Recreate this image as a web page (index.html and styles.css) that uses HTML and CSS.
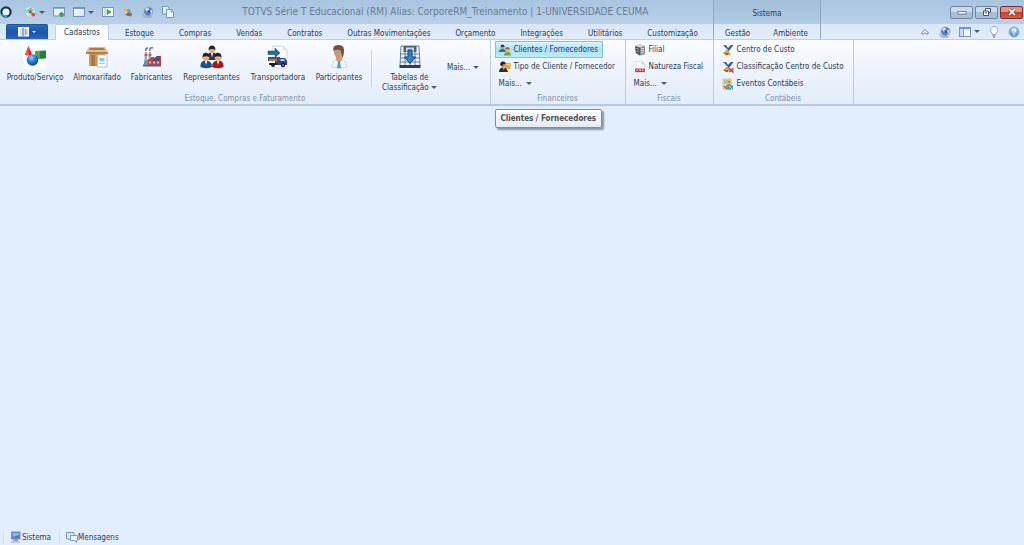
FILE: index.html
```html
<!DOCTYPE html>
<html lang="pt-BR">
<head>
<meta charset="utf-8">
<meta name="viewport" content="width=device-width, initial-scale=1">
<title>TOTVS Série T Educacional (RM)</title>
<link rel="stylesheet" href="styles.css">
</head>
<body>
<svg class="defs" aria-hidden="true">
  <defs>
    <linearGradient id="screen" x1="0" y1="0" x2="1" y2="1"><stop offset="0" stop-color="#fff"/><stop offset="1" stop-color="#cfe0f5"/></linearGradient>
    <radialGradient id="ball" cx=".4" cy=".3" r=".7"><stop offset="0" stop-color="#9ad0ff"/><stop offset=".5" stop-color="#2f7be0"/><stop offset="1" stop-color="#0b3f9e"/></radialGradient>
    <radialGradient id="help" cx=".5" cy=".3" r=".7"><stop offset="0" stop-color="#c4e6fa"/><stop offset="1" stop-color="#3b83c4"/></radialGradient>
    <symbol id="globe" viewBox="0 0 12 12">
      <circle cx="6.500" cy="5.500" r="4.600" fill="#5b7fc4" stroke="#a7b4cb" stroke-width=".8"/>
      <path d="M3 3l3-1.500 1 2-2 2.500zM7 5l3-1 .5 2.500L8 9z" fill="#dfe8f8"/>
      <path d="M5 4l3 1 1 3-2-1z" fill="#2a3f94"/>
      <path d="M.5 7.500Q2 11 6 10.500l3.500.5-4 .9Q1 12 .5 7.500z" fill="#b9c2d2" stroke="#78849b" stroke-width=".4"/>
    </symbol>
    <symbol id="window" viewBox="0 0 12 10">
      <rect x=".5" y=".5" width="11" height="9" fill="url(#screen)" stroke="#7392c0"/>
      <path d="M1 1.500h10" stroke="#6d9ade"/>
    </symbol>
  </defs>
</svg>
<header class="titlebar">
  <div class="quick">
    <svg class="logo" viewBox="0 0 12 12"><circle cx="6" cy="6" r="4.600" fill="#e8f6fb" stroke="#123552" stroke-width="2.200"/><path d="M2 7.500Q3.500 10.500 7 10.500" fill="none" stroke="#42b1cb" stroke-width="1.400"/></svg>
    <button class="qbtn" aria-label="Módulos"><svg viewBox="0 0 12 12"><circle cx="6" cy="5.800" r="5.200" fill="#d3ecdf" stroke="#9fc4c9" stroke-width=".5"/><path d="M2 5L6 2l4 2-3 2z" fill="#7cbf8c"/><path d="M1 4l4 4M8 1L5 6" stroke="#6db1d6"/><circle cx="6.500" cy="6" r="1.600" fill="#dc4351"/><circle cx="9.200" cy="8.500" r="2" fill="#d6495d"/><circle cx="3.500" cy="8" r="1.700" fill="#f5fbff" stroke="#6eb1b9" stroke-width=".6"/></svg><i class="caret"></i></button>
    <button class="qbtn" aria-label="Nova janela"><svg viewBox="0 0 12 12"><rect x=".5" y="1.500" width="11" height="8.500" fill="url(#screen)" stroke="#7893b5"/><path d="M1 2.500h10" stroke="#83b5dc"/><path d="M8.500 6v5M6 8.500h5" stroke="#3d9b42" stroke-width="2"/></svg></button>
    <button class="qbtn" aria-label="Janelas"><svg viewBox="0 0 12 12"><use href="#window" y="1" width="12" height="10"/></svg><i class="caret"></i></button>
    <button class="qbtn" aria-label="Executar"><svg viewBox="0 0 12 12"><rect x=".5" y="1.500" width="11" height="9" fill="#f2faf7" stroke="#7893b5"/><path d="M3 2v8" stroke="#a2bcda"/><path d="M5 3.500l4 2.500-4 2.500z" fill="#45a951" stroke="#267e35" stroke-width=".5"/></svg></button>
    <button class="qbtn" aria-label="Aparência"><svg viewBox="0 0 12 12"><path d="M2 1.500l4 1 2 3.500-4 1z" fill="#f8e4a8"/><path d="M2.500 2.500L7 7" stroke="#e5a63f" stroke-width="1.800"/><path d="M5.500 3l3 3" stroke="#5989ce" stroke-width="1.500"/><path d="M3 9l6 1.500L10 8 6.500 6z" fill="#756a68"/><circle cx="9" cy="8" r="1.200" fill="#d8564c"/></svg></button>
    <button class="qbtn" aria-label="Portal"><svg viewBox="0 0 12 12"><use href="#globe"/></svg></button>
    <button class="qbtn" aria-label="Copiar"><svg viewBox="0 0 12 12"><path d="M.5.500h5l1.500 1.500v6H.5z" fill="#e2efff" stroke="#6d98cf"/><path d="M4.500 3.500h5l2 2v6h-7z" fill="#f4f9ff" stroke="#6d98cf"/><path d="M9 3.500V6h2.500" fill="none" stroke="#6d98cf"/></svg></button>
  </div>
  <h1 class="title">TOTVS Série T Educacional (RM) Alias: CorporeRM_Treinamento | 1-UNIVERSIDADE CEUMA</h1>
  <div class="winbtns">
    <button class="wbtn" aria-label="Minimizar"><svg viewBox="0 0 12 10"><rect x="2" y="4.500" width="8" height="2.500" fill="#fff" stroke="#5c6c82" stroke-width=".8"/></svg></button>
    <button class="wbtn" aria-label="Restaurar"><svg viewBox="0 0 12 10"><path d="M4.500 1.500h5v4h-5z" fill="#fff" stroke="#45556c"/><path d="M2.500 4h5v4.500h-5z" fill="#fff" stroke="#45556c"/><path d="M4 5.800h2" stroke="#45556c"/></svg></button>
    <button class="wbtn close" aria-label="Fechar"><svg viewBox="0 0 12 10"><path d="M3.200 2.200l5.600 5.600M8.800 2.200L3.200 7.800" stroke="#5e2b2b" stroke-width="3"/><path d="M3.200 2.200l5.600 5.600M8.800 2.200L3.200 7.800" stroke="#fff" stroke-width="1.900"/></svg></button>
  </div>
</header>
<nav class="tabs">
  <button class="app" aria-label="Menu do aplicativo"><svg viewBox="0 0 12 10"><rect x=".5" y=".5" width="10" height="8.500" fill="#f4f8ff" stroke="#fff"/><path d="M5 1v8" stroke="#3d5f98"/><path d="M6.500 3h3M6.500 5h3M6.500 7h3" stroke="#526f9f" stroke-width=".9"/><path d="M2 3h2M2 5h2M2 7h2" stroke="#a9bad7" stroke-width=".8"/></svg><i class="caret light"></i></button>
  <button class="tab active">Cadastros</button>
  <button class="tab">Estoque</button>
  <button class="tab">Compras</button>
  <button class="tab">Vendas</button>
  <button class="tab">Contratos</button>
  <button class="tab">Outras Movimentações</button>
  <button class="tab">Orçamento</button>
  <button class="tab">Integrações</button>
  <button class="tab">Utilitários</button>
  <button class="tab">Customização</button>
  <div class="context">
    <span class="ctxname">Sistema</span>
    <button class="tab">Gestão</button>
    <button class="tab">Ambiente</button>
  </div>
  <div class="tools">
    <button class="qbtn" aria-label="Recolher faixa"><svg viewBox="0 0 12 12"><path d="M3 6.500L6 3.500l3 3v1.500H7.500L6 6.500 4.500 8H3z" fill="#fff" stroke="#4c5a70" stroke-width=".8"/></svg></button>
    <button class="qbtn" aria-label="Web"><svg viewBox="0 0 12 12"><use href="#globe"/></svg></button>
    <button class="qbtn" aria-label="Layout"><svg viewBox="0 0 12 12"><rect x=".5" y="1.500" width="11" height="9" fill="#f7faff" stroke="#7392c0"/><path d="M1 2.500h10" stroke="#6d9ade" stroke-width="1.500"/><path d="M1 3h3.500v7H1z" fill="#c9dcf5"/><path d="M4.500 3v7" stroke="#7392c0" stroke-width=".8"/></svg><i class="caret"></i></button>
    <button class="qbtn" aria-label="Dica"><svg viewBox="0 0 12 12"><path d="M4.500 8.500Q4.300 7 3 6A3.600 3.600 0 1 1 9 6Q7.700 7 7.500 8.500z" fill="#fbfdff" stroke="#8698b3" stroke-width=".8"/><path d="M4.500 9.800h3M5 11.200h2" stroke="#75869f"/></svg></button>
    <button class="qbtn" aria-label="Ajuda"><svg viewBox="0 0 12 12"><circle cx="6" cy="6" r="5" fill="url(#help)" stroke="#7fa9d1" stroke-width=".8"/><path d="M4.300 4.800Q4.400 3.200 6 3.200t1.700 1.400Q7.700 5.500 6 6.300v.9M6 8.300v1.100" fill="none" stroke="#fff" stroke-width="1.200"/></svg></button>
  </div>
</nav>
<main class="ribbon">
  <section class="group">
    <div class="items">
      <button class="big w-produto"><svg viewBox="0 0 24 24"><path d="M0 0h23v24H0z" fill="#fff" opacity=".7"/><path d="M12 6l11-.5v8L13 14z" fill="#257f35"/><path d="M12 6l5 0v7.800l-4 .2z" fill="#4aa449"/><path d="M5.500 1L9 9.500Q5.500 11.500 2 9.500z" fill="#dc1c12"/><path d="M5.500 1L6 10.500Q3.500 10.500 2 9.500z" fill="#f25a48"/><circle cx="9.500" cy="15" r="5.800" fill="url(#ball)"/></svg><span>Produto/Serviço</span></button>
      <button class="big w-almox"><svg viewBox="0 0 24 24"><path d="M4 7h16v14H4z" fill="#c99a5c"/><path d="M4 2h16l3 5H1z" fill="#e2bd87"/><path d="M1 7h22v2H1z" fill="#b07f48"/><path d="M5 3h14l1 2H4z" fill="#a67b4b"/><path d="M6 10h4v11H6z" fill="#a97840"/><path d="M12.500 10h9.500v12h-9.500z" fill="#f6fbff" stroke="#a4b9c8" stroke-width=".8"/><path d="M14.500 13h5v3.500h-5z" fill="#8cc9df"/><path d="M14 18.500h6" stroke="#a8c4d4"/></svg><span>Almoxarifado</span></button>
      <button class="big w-fabr"><svg viewBox="0 0 24 24"><path d="M5 7h2v13H4zM9 7h2v13H8z" fill="#9fa4bb"/><path d="M4.500 10h3M8.500 10h3" stroke="#cf4250" stroke-width="1.500"/><path d="M6 6Q5 3 8 3M10 6Q9 2 13 3" stroke="#70708f" stroke-width="1.500" fill="none"/><path d="M7 15l4-2v-1h3v2l3-3h4v9H7z" fill="#bb4745"/><path d="M13 14l4-3h3v5h-7z" fill="#51508a"/><path d="M9 17.500h2M13 17.500h2M17 17.500h2" stroke="#f0c27c" stroke-width="2"/><path d="M3 19.500h18v2H3z" fill="#5c5d80"/><path d="M4 16h4v4H4z" fill="#5b98b2"/></svg><span>Fabricantes</span></button>
      <button class="big w-repr"><svg viewBox="0 0 24 24"><path d="M7 12Q7 7.500 12 7.500t5 4.500v3H7z" fill="#283143"/><path d="M11 8h2l-1 5z" fill="#fff"/><circle cx="12" cy="4.800" r="3.200" fill="#e4ad80"/><path d="M8.600 5Q8.500.500 12 .500T15.400 5Q12 2.800 8.600 5z" fill="#34241f"/><path d="M.5 22Q0 15.500 6 15.500t6 6.500Q6 24.500.5 22z" fill="#1b508d"/><path d="M12 22q0-6.500 6-6.500T23.500 22q-5.500 2.500-11.500 0z" fill="#a91520"/><path d="M4.800 15.500h2.600L6 20zM16.800 15.500h2.600L18 20z" fill="#fff"/><circle cx="6" cy="12.500" r="3.400" fill="#e6b184"/><circle cx="18" cy="12.500" r="3.400" fill="#e6b184"/><path d="M2.400 12.500Q2.400 7.500 6 7.800t3.600 4.700Q6 10 2.400 12.500zM14.400 12.500Q14.400 7.500 18 7.800t3.600 4.700Q18 10 14.400 12.500z" fill="#30211e"/></svg><span>Representantes</span></button>
      <button class="big w-transp"><svg viewBox="0 0 24 24"><path d="M7 1h10l4 4v18H7z" fill="#f7faff" stroke="#bdc7d4" stroke-width=".7"/><path d="M17 1v4h4" fill="#d8e1ed"/><path d="M2 6h7V3l5 5-5 4.500v-3H2z" fill="#206f9f" stroke="#154864" stroke-width=".5"/><path d="M2 12h12v4H2z" fill="#55505c"/><path d="M3 14h8v2H3z" fill="#c87941"/><path d="M14 13h5l2 3v4H9v-4h5z" fill="#304482"/><path d="M14.500 14h3.500l1 2h-4.500z" fill="#b8cff0"/><path d="M3 18h8v2H3z" fill="#22222e"/><circle cx="7" cy="20" r="2" fill="#181b29"/><circle cx="17" cy="20" r="2.200" fill="#181b29"/><circle cx="17" cy="20" r=".8" fill="#ccd"/></svg><span>Transportadora</span></button>
      <button class="big w-part"><svg viewBox="0 0 24 24"><path d="M5 22q0-8 7-8t8 8q-7 3-15 0z" fill="#f3f7fc" stroke="#bccbdd" stroke-width=".8"/><path d="M9 12h6v3l-3 3-3-3z" fill="#cf9a7d"/><path d="M11 16h2l1 7h-4z" fill="#4d9bd5"/><ellipse cx="11.500" cy="7" rx="4.500" ry="6" fill="#c9997c"/><path d="M6.500 6Q5 0 11 0t6 5q0 6-2 8 0-6-2-8-3-1-6.500 1z" fill="#72513f"/></svg><span>Participantes</span></button>
      <i class="sep"></i>
      <button class="big w-tabela"><svg viewBox="0 0 24 24"><path d="M3 1h18l1 20H2z" fill="#edf3fa" stroke="#6f7e90"/><path d="M7 6v15M17 6v15M12 6v15M2 9h20M2 13h20M2 17h20" stroke="#6c7e94"/><path d="M1.500 20h21v3h-21z" fill="#353e4a"/><path d="M5.500 1h13v6h-13z" fill="#4e6174"/><path d="M8 2.500h8v4H8z" fill="#c8d9e8"/><path d="M10 5h4v7h3.500L12 18.500 6.500 12H10z" fill="#2d88c8" stroke="#123f70"/></svg><span>Tabelas de<br>Classificação <i class="caret"></i></span></button>
      <button class="more">Mais... <i class="caret"></i></button>
    </div>
    <h2>Estoque, Compras e Faturamento</h2>
  </section>
  <section class="group w-fin">
    <div class="rows">
      <button class="row hot"><svg viewBox="0 0 12 12"><path d="M0 7.500Q0 5 3.500 5T7 8H0z" fill="#2f7770"/><circle cx="3.500" cy="3.500" r="1.800" fill="#c8945c"/><path d="M1.500 3.200Q1.500.500 3.500.500T5.700 3Q3.500 2 1.500 3.200z" fill="#262b2f"/><path d="M5 11.500Q5 8 8.500 8t3.500 3.500z" fill="#74a33e"/><circle cx="8.300" cy="6" r="2.200" fill="#e7ba72"/><path d="M6 5.500Q6 3 8.300 3T10.800 5.500Q8 4.500 6 5.500z" fill="#8b652e"/></svg><span>Clientes / Fornecedores</span><span class="tooltip" role="tooltip">Clientes / Fornecedores</span></button>
      <button class="row"><svg viewBox="0 0 12 12"><path d="M6 2h5.500v6H6z" fill="#e6a737"/><path d="M6 3.500h5.500" stroke="#f4d170"/><circle cx="4" cy="3.600" r="2.400" fill="#ba7c4f"/><path d="M1.200 4Q1 .5 4 .5T6.500 3Q4 2 3 5z" fill="#241c1c"/><path d="M0 11Q0 6.500 4 6.500T9 11z" fill="#352e35"/><path d="M3.500 6.500h2L5 9z" fill="#d9cfb8"/></svg><span>Tipo de Cliente / Fornecedor</span></button>
      <button class="row plain">Mais... <i class="caret"></i></button>
    </div>
    <h2>Financeiros</h2>
  </section>
  <section class="group w-fis">
    <div class="rows">
      <button class="row"><svg viewBox="0 0 12 12"><path d="M1 2l5-1.500L11 2v8l-5 1.500L2 9z" fill="#85898d"/><path d="M1 2l5 1.500v8L2 9z" fill="#505559"/><path d="M1 2l5-1.500L11 2 6 3.500z" fill="#d2d4d5"/><path d="M7 5l3-.8M7 7l3-.8M7 9l3-.8" stroke="#e8eaec"/><path d="M2.500 4.500l2 .7M3 7l1.500.6" stroke="#c4c8cb"/></svg><span>Filial</span></button>
      <button class="row"><svg viewBox="0 0 12 12"><path d="M2 .500h6L10.500 3v8.500H2z" fill="#fff" stroke="#cdd8e8" stroke-width=".8"/><path d="M8 .5V3h2.500" fill="none" stroke="#b2c6de"/><rect x="1" y="7.500" width="10" height="3.500" rx="1" fill="#d7353b"/><path d="M2.500 9.200h1.500M5 9.200h2M8 9.200h1.500" stroke="#fbd8d8" stroke-width="1.200"/></svg><span>Natureza Fiscal</span></button>
      <button class="row plain">Mais... <i class="caret"></i></button>
    </div>
    <h2>Fiscais</h2>
  </section>
  <section class="group w-con">
    <div class="rows">
      <button class="row"><svg viewBox="0 0 12 12"><path d="M5.500 5L9 11l-5 .5L1 9z" fill="#e9a23b"/><path d="M1.500 9.500l4 1.500 1-2z" fill="#8f4e29"/><path d="M1 1.500L4 1l2 3 3-3h2.500L8 5.500 6.500 7z" fill="#2856a5"/><path d="M2 2l4 4" stroke="#8cb9e8"/></svg><span>Centro de Custo</span></button>
      <button class="row"><svg viewBox="0 0 12 12"><path d="M5.500 5L8 10l-4 1.500L1 9z" fill="#e9a23b"/><path d="M1.500 9.500l4 1.500 1-2z" fill="#8f4e29"/><path d="M1 1.500L4 1l2 3 3-3h2.500L8 5.500 6.500 7z" fill="#2856a5"/><path d="M2 2l4 4" stroke="#8cb9e8"/><path d="M7 7l4.500 4.500M11.500 7.500L7.500 11" stroke="#bd3041" stroke-width="1.400"/></svg><span>Classificação Centro de Custo</span></button>
      <button class="row"><svg viewBox="0 0 12 12"><path d="M1 1h8v10H1z" fill="#f0df91" stroke="#b5a773" stroke-width=".6"/><path d="M2 3h4M2 5h3" stroke="#77a2c5"/><circle cx="7" cy="4" r="1.800" fill="#df8d44"/><path d="M4 7l3-1 4 2v3.500H5z" fill="#4a9aaa"/><path d="M2 8l3 3" stroke="#cd544d" stroke-width="1.500"/><path d="M7 8l3 3" stroke="#d8edea"/></svg><span>Eventos Contábeis</span></button>
    </div>
    <h2>Contábeis</h2>
  </section>
</main>
<div class="workspace"></div>
<footer class="status">
  <button class="sbtn"><svg viewBox="0 0 12 12"><rect x="1.500" y="1" width="8.500" height="7" fill="#557dc3" stroke="#8192aa"/><path d="M2 2h7v2L3 6z" fill="#91b2e5"/><path d="M4 8.500h4v1.500H3z" fill="#8996a9"/><path d="M1 11h9" stroke="#b2bbc9" stroke-width="1.500"/></svg><span>Sistema</span></button>
  <button class="sbtn"><svg viewBox="0 0 12 12"><path d="M.5 1.500h7.500v6H4L2.500 9V7.500h-2z" fill="#dcebff" stroke="#7798c5"/><path d="M4.500 4.500h7v5h-1V11.500L8.500 9.500h-4z" fill="#f2f8ff" stroke="#7798c5"/></svg><span>Mensagens</span></button>
</footer>
</body>
</html>
```
FILE: styles.css
```css
* { box-sizing: border-box; }
html { height: 100%; }
body {
  margin: 0;
  min-height: 100%;
  display: flex;
  flex-direction: column;
  background: #e2eefe;
  color: #2a3a58;
  font: 8px/10px "DejaVu Sans Condensed", "Open Sans", sans-serif;
}
button {
  font: inherit;
  color: inherit;
  background: none;
  border: 0;
  padding: 0;
  margin: 0;
  white-space: nowrap;
}
svg { display: block; width: 12px; height: 12px; flex: none; }
.defs { position: absolute; width: 0; height: 0; }
h1, h2 { margin: 0; font-weight: 400; }

.caret {
  display: inline-block;
  flex: none;
  border: solid transparent;
  border-width: 3px 3px 0;
  border-top-color: #4c5b76;
  vertical-align: middle;
}
.caret.light { border-top-color: #fff; border-width: 2px 2px 0; }

.titlebar {
  display: flex;
  align-items: center;
  height: 24px;
  background: linear-gradient(#a9c4e0, #b9d0e9);
}
.quick { display: flex; align-items: center; gap: 8px; }
.logo { margin-right: 4px; }
.qbtn { display: flex; align-items: center; gap: 3px; }
.title { flex: 1; text-align: center; font-size: 10px; line-height: 24px; color: #6a7b90; white-space: nowrap; }
.winbtns { flex: 0 0 30%; display: flex; justify-content: flex-end; gap: 2px; padding-right: 1px; }
.wbtn {
  display: flex;
  align-items: center;
  justify-content: center;
  width: 23px;
  height: 13px;
  border: 1px solid #6f849e;
  border-radius: 2px;
  background: linear-gradient(#cbdaea 50%, #a9bfd8 50%);
}
.wbtn svg { height: 10px; }
.wbtn.close { border-color: #74312e; background: linear-gradient(#dd9688 45%, #c33d28 50%, #d2604a); }

.tabs {
  display: flex;
  align-items: stretch;
  height: 16px;
  background: linear-gradient(#d9e6f6, #e2ecfa);
  border-bottom: 1px solid #bfcfe3;
}
.app {
  display: flex;
  align-items: center;
  justify-content: center;
  gap: 2px;
  width: 42px;
  margin: 0 7px 0 6px;
  background: linear-gradient(#2d6cc0, #1d55a8 50%, #2867bd);
  border: 1px solid #1e559f;
  border-bottom: 0;
  border-radius: 2px 2px 0 0;
}
.app svg { height: 10px; }
.tab { padding: 2px 13px 0 12px; line-height: 16px; }
.tab.active {
  padding: 0 8px;
  margin: 0 4px 0 0;
  height: 16px;
  background: #fafcff;
  border: 1px solid #bfcfe3;
  border-bottom: 0;
  border-radius: 2px 2px 0 0;
  line-height: 16px;
}
.context {
  display: grid;
  grid-template-columns: auto auto;
  grid-template-rows: 24px 15px;
  margin: -24px 0 0 2px;
  border: solid #8fa8c4;
  border-width: 0 1px;
  background: linear-gradient(#a3bedb, #b3cbe4 24px, #dce8f7 24px, #e4eefb);
  height: 39px;
}
.context .tab { padding: 2px 12px 0 11px; }
.ctxname { grid-column: span 2; line-height: 28px; text-align: center; }
.tools { margin-left: auto; display: flex; gap: 8px; padding-right: 4px; }

.ribbon {
  display: flex;
  height: 66px;
  background: linear-gradient(#fafcff, #edf3fc 50%, #e3ecf9);
  border-bottom: 2px solid #b8c9e0;
}
.group {
  display: flex;
  flex-direction: column;
  justify-content: space-between;
  padding: 1px 0 0;
  border-right: 1px solid #bccbdf;
}
.group h2 { font-size: 8px; line-height: 10px; text-align: center; color: #8290a5; }
.items { display: flex; align-items: flex-start; padding: 4px 11px 0 5px; }
.big { display: flex; flex-direction: column; align-items: center; gap: 4px; line-height: 10px; }
.big svg { width: 24px; height: 24px; }
.w-produto { width: 60px; }
.w-almox { width: 64px; }
.w-fabr { width: 45px; }
.w-repr { width: 75px; }
.w-transp { width: 58px; }
.w-part { width: 64px; }
.sep { width: 1px; height: 37px; margin-top: 5px; background: #c8d5e7; }
.w-tabela { width: 75px; }
.more { line-height: 42px; padding-top: 2px; }
.rows { display: flex; flex-direction: column; align-items: flex-start; padding-left: 4px; }
.row {
  position: relative;
  display: flex;
  align-items: center;
  gap: 3px;
  height: 17px;
  line-height: 12px;
  padding: 0 4px 0 3px;
  border: 1px solid transparent;
}
.row > span { padding-top: 1px; }
.row.plain { gap: 4px; }
.row.hot { border-color: #7fc5e2; background: linear-gradient(#daf5ff, #a9e2fa 50%, #bdebfc); }
.row > .tooltip {
  position: absolute;
  top: 67px;
  left: -1px;
  z-index: 1;
  padding: 0 5px;
  line-height: 17px;
  font-weight: 700;
  color: #4c4f58;
  background: linear-gradient(#fff, #e5eaf3);
  border: 1px solid #868b95;
  border-radius: 2px;
  box-shadow: 2px 2px 2px #8892a5;
}
.w-fin { width: 135px; }
.w-fis { width: 88px; }
.w-con { width: 140px; }

.workspace { flex: 1; }
.status { display: flex; align-items: center; height: 16px; padding-left: 3px; }
.sbtn { display: flex; align-items: center; padding: 0 8px 0 6px; border-left: 1px solid #d3deed; }
.sbtn span { padding-top: 2px; }
```
